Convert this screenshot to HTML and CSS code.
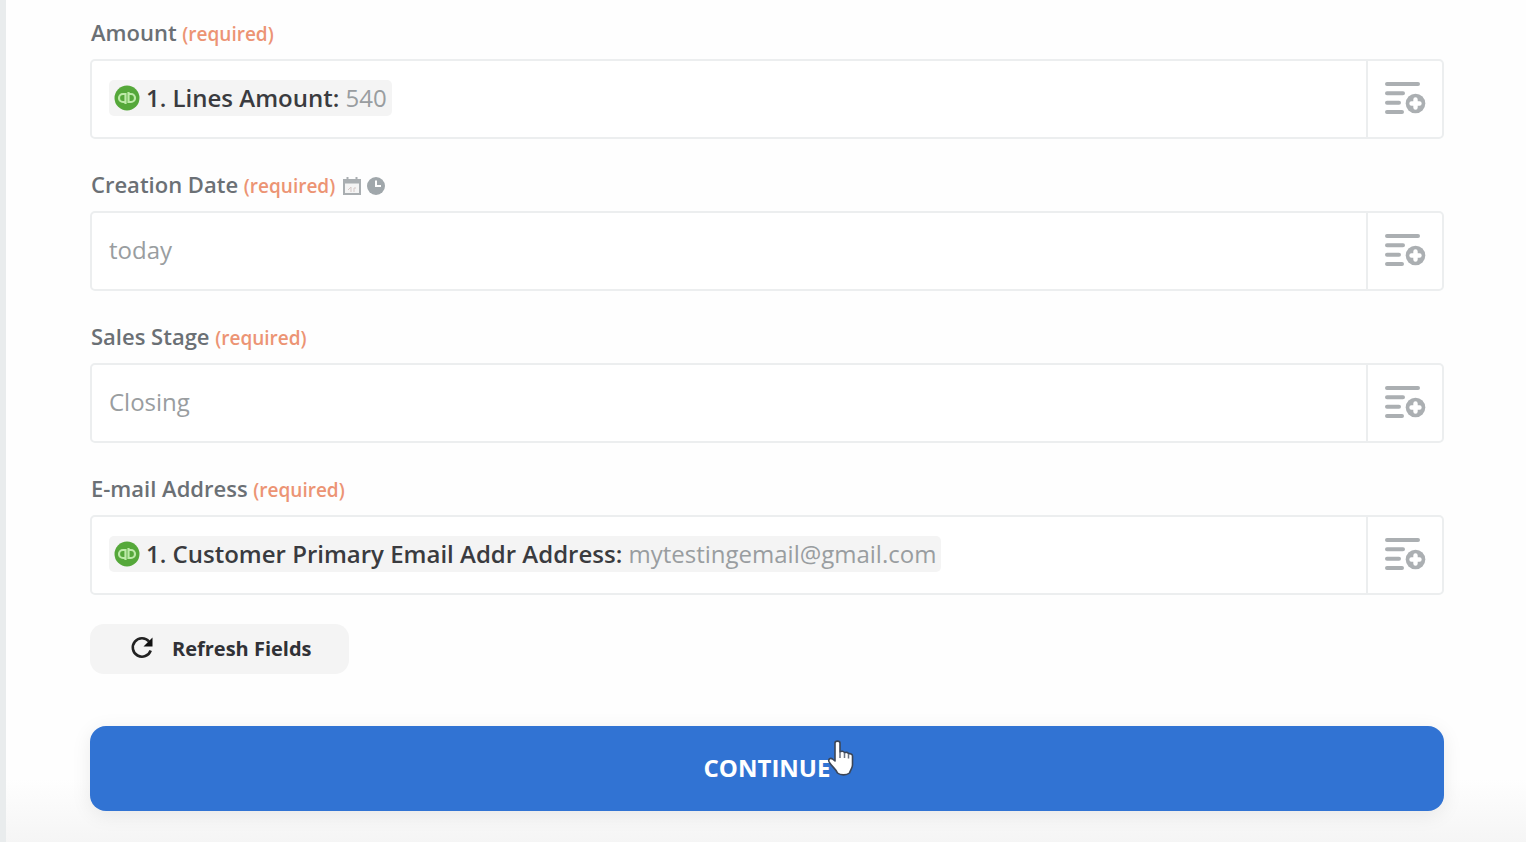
FILE: index.html
```html
<!DOCTYPE html>
<html lang="en">
<head>
<meta charset="utf-8">
<title>Set up action</title>
<link rel="stylesheet" href="styles.css">
</head>
<body>
<svg class="sprite" aria-hidden="true">
  <symbol id="insert" viewBox="0 0 42 36">
    <path d="M3 3h31M3 12.300h16M3 21.700h12M3 31h15" fill="none" stroke="currentColor" stroke-width="4" stroke-linecap="round"/>
    <circle cx="31.500" cy="22.500" r="9.800" fill="currentColor"/>
    <path d="M31.500 18.500v8M27.500 22.500h8" stroke="#fff" stroke-width="4.400" stroke-linecap="round"/>
  </symbol>
  <symbol id="qb" viewBox="0 0 26 26">
    <circle cx="13" cy="13" r="12.500" fill="#55a83a"/>
    <g fill="none" stroke="#bdeaa8" stroke-width="2.200">
      <path d="M11.500 19V9H9a4 4 0 0 0 0 8h2"/>
      <path d="M14.500 7v10H17a4 4 0 0 0 0-8h-2"/>
    </g>
  </symbol>
</svg>
<form class="panel">
  <div class="field">
    <div class="label"><span id="amount-label">Amount <span class="required">(required)</span></span></div>
    <div class="control">
      <div class="value" role="textbox" tabindex="0" aria-labelledby="amount-label">
        <span class="chip"><svg class="chip-icon"><use href="#qb"/></svg><span><b>1. Lines Amount:</b> 540</span></span>
      </div>
      <button class="insert" type="button" aria-label="Insert data"><svg><use href="#insert"/></svg></button>
    </div>
  </div>
  <div class="field">
    <div class="label">
      <label for="date">Creation Date <span class="required">(required)</span></label>
      <svg class="hint" viewBox="0 0 18 18"><path d="M1 3h16v14H1z" fill="#f4f4f4" stroke="#a9aeb1" stroke-width="2"/><path d="M1 2h16v4.500H1z" fill="#a9aeb1"/><path d="M4.500 0v4M13.500 0v4" stroke="#a9aeb1" stroke-width="2"/><path d="M5 13l3-3v5M11 15v-4h2" fill="none" stroke="#d5c8c6" stroke-width="1"/></svg>
      <svg class="hint" viewBox="0 0 18 18"><circle cx="9" cy="9" r="9" fill="#a0a7ab"/><path d="M9 3.500V9h5" fill="none" stroke="#fff" stroke-width="2"/></svg>
    </div>
    <div class="control">
      <input class="value" id="date" type="text" value="today">
      <button class="insert" type="button" aria-label="Insert data"><svg><use href="#insert"/></svg></button>
    </div>
  </div>
  <div class="field">
    <div class="label"><label for="stage">Sales Stage <span class="required">(required)</span></label></div>
    <div class="control">
      <input class="value" id="stage" type="text" value="Closing">
      <button class="insert" type="button" aria-label="Insert data"><svg><use href="#insert"/></svg></button>
    </div>
  </div>
  <div class="field">
    <div class="label"><span id="email-label">E-mail Address <span class="required">(required)</span></span></div>
    <div class="control">
      <div class="value" role="textbox" tabindex="0" aria-labelledby="email-label">
        <span class="chip"><svg class="chip-icon"><use href="#qb"/></svg><span><b>1. Customer Primary Email Addr Address:</b> mytestingemail@gmail.com</span></span>
      </div>
      <button class="insert" type="button" aria-label="Insert data"><svg><use href="#insert"/></svg></button>
    </div>
  </div>
  <button class="refresh" type="button">
    <svg viewBox="0 0 24 24"><path d="M19 5.500A9.200 9.200 0 1 0 20.700 14.500" fill="none" stroke="#222" stroke-width="2.600"/><path d="M22.500 1.500v9h-9z" fill="#111"/></svg>
    Refresh Fields
  </button>
  <button class="continue" type="submit">CONTINUE
    <svg class="pointer" viewBox="0 0 28 38"><path d="M8 3c0-2.500 5-2.500 5 0v9c1-1.200 4-1 4.500.800 1.200-1 3.800-.600 4 1.200 1.500-.800 4 0 4 2v9c0 3-2 5-3 8-3 2.500-9 2.500-12 0C9 29 4 26 2 21.500c-1-2.500 1.500-4 3.500-2.500L8 21z" fill="#fff" stroke="#3c4658" stroke-width="1.600" stroke-linejoin="round"/><path d="M13 12v6M17.500 13v5M21.500 14.500v4" stroke="#6b7280" stroke-width="1.500"/></svg>
  </button>
</form>
</body>
</html>
```
FILE: styles.css
```css
* {
  box-sizing: border-box;
}

body {
  margin: 0;
  min-height: 100vh;
  font-family: "Open Sans", "Noto Sans", sans-serif;
  font-size: 24px;
  color: #999da0;
  background: #fefefe;
}

button,
input {
  font: inherit;
  color: inherit;
}

button {
  cursor: pointer;
}

.sprite {
  display: none;
}

.panel {
  display: flex;
  flex-direction: column;
  min-height: 100vh;
  padding: 16px 82px 32px 84px;
  border-left: 6px solid #e9eced;
  background: linear-gradient(to top, #f5f5f5, #fefefe 64px);
}

.field {
  margin-bottom: 29px;
}

.label {
  display: flex;
  align-items: center;
  gap: 6px;
  height: 32px;
  margin-bottom: 11px;
  padding-left: 1px;
  font-size: 22px;
  font-weight: 600;
  color: #6b7075;
}

.label label {
  margin-right: 2px;
}

.required {
  font-size: 19px;
  color: #ec9474;
}

.hint {
  width: 18px;
  height: 18px;
  margin-top: 4px;
}

.control {
  display: flex;
  height: 80px;
  border: 2px solid #eceeef;
  border-radius: 5px;
  background: #fff;
}

.value {
  display: flex;
  flex: 1;
  align-items: center;
  min-width: 0;
  padding: 0 17px 3px;
  border: 0;
  outline: 0;
  background: transparent;
}

.chip {
  display: flex;
  align-items: center;
  gap: 6px;
  height: 36px;
  padding: 0 5px;
  border-radius: 5px;
  background: #f4f4f4;
  line-height: 32px;
  white-space: nowrap;
}

.chip b {
  font-weight: 600;
  color: #3a3b3f;
}

.chip-icon {
  width: 26px;
  height: 26px;
}

.insert {
  display: flex;
  align-items: center;
  justify-content: center;
  width: 76px;
  padding: 0 0 1px;
  border: 0;
  border-left: 2px solid #eceeef;
  background: transparent;
  color: #abafb2;
}

.insert svg {
  width: 42px;
  height: 36px;
}

.refresh {
  display: flex;
  align-items: center;
  align-self: flex-start;
  gap: 18px;
  height: 50px;
  margin-bottom: 52px;
  padding: 0 37px 2px 40px;
  border: 0;
  border-radius: 14px;
  background: #f4f4f4;
  font-size: 20px;
  font-weight: 700;
  color: #303136;
}

.refresh svg {
  width: 24px;
  height: 24px;
}

.continue {
  position: relative;
  height: 85px;
  padding-bottom: 3px;
  border: 0;
  border-radius: 16px;
  background: #3173d3;
  box-shadow: 0 4px 20px rgba(0, 0, 0, 0.08);
  font-weight: 700;
  color: #fff;
}

.pointer {
  position: absolute;
  top: 14px;
  left: calc(50% + 60px);
  width: 28px;
  height: 38px;
}
```
